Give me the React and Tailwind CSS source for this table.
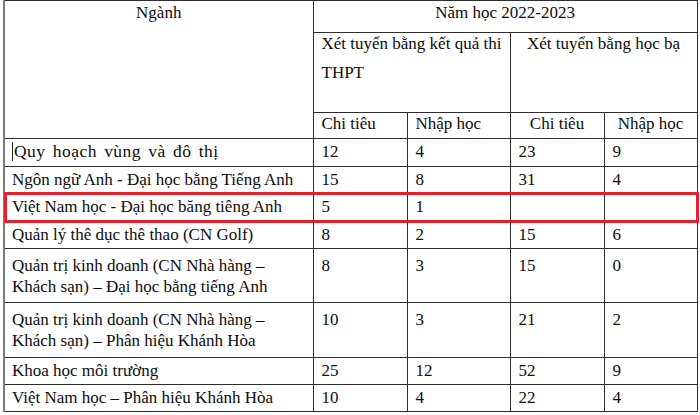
export default function App() {
  const rows = [
    { n: ["Quy hoạch vùng và đô thị"], v: ["12", "4", "23", "9"], h: "h-[27.5px]", cursor: true },
    { n: ["Ngôn ngữ Anh - Đại học bằng Tiếng Anh"], v: ["15", "8", "31", "4"], h: "h-[27.5px]" },
    { n: ["Việt Nam học - Đại học băng tiêng Anh"], v: ["5", "1", "", ""], h: "h-[28px]" },
    { n: ["Quản lý thê dục thê thao (CN Golf)"], v: ["8", "2", "15", "6"], h: "h-[27px]" },
    { n: ["Quản trị kinh doanh (CN Nhà hàng –", "Khách sạn) – Đại học bằng tiếng Anh"], v: ["8", "3", "15", "0"], h: "h-[54px]" },
    { n: ["Quản trị kinh doanh (CN Nhà hàng –", "Khách sạn) – Phân hiệu Khánh Hòa"], v: ["10", "3", "21", "2"], h: "h-[55px]" },
    { n: ["Khoa học môi trường"], v: ["25", "12", "52", "9"], h: "h-[27px]" },
    { n: ["Việt Nam học – Phân hiệu Khánh Hòa"], v: ["10", "4", "22", "4"], h: "h-[27px]" },
  ];
  const bd = "border border-[#2e2e2e]";
  return (
    <div className="w-[700px] h-[415px] bg-white relative overflow-hidden font-[family-name:'Liberation_Serif',serif] text-[17px] leading-[21px] text-[#0d0d0d]">
      <div className="pl-[3px]">
        <table className="table-fixed border-collapse w-[693px] border-l-2 border-l-[#7a7a7a]">
          <colgroup>
            <col className="w-[309px]" />
            <col className="w-[94px]" />
            <col className="w-[103px]" />
            <col className="w-[94px]" />
            <col className="w-[93px]" />
          </colgroup>
          <tbody>
            <tr className="h-[32px]">
              <td rowSpan={3} className={`${bd} border-l-2 border-l-[#7a7a7a] align-top text-center p-0 pt-[1px]`}>Ngành</td>
              <td colSpan={4} className={`${bd} align-top text-center p-0 pt-[1px]`}>Năm học 2022-2023</td>
            </tr>
            <tr className="h-[80px]">
              <td colSpan={2} className={`${bd} align-top px-[8px] pt-0`}>
                <div>Xét tuyển bằng kết quả thi</div>
                <div className="mt-[8px]">THPT</div>
              </td>
              <td colSpan={2} className={`${bd} align-top text-center p-0 pt-0`}>Xét tuyển bằng học bạ</td>
            </tr>
            <tr className="h-[26px]">
              <td className={`${bd} align-top px-[8px] pt-0`}>Chi tiêu</td>
              <td className={`${bd} align-top px-[8px] pt-0`}>Nhập học</td>
              <td className={`${bd} align-top text-center p-0 pt-0`}>Chi tiêu</td>
              <td className={`${bd} align-top text-center p-0 pt-0`}>Nhập học</td>
            </tr>
            {rows.map((r, i) => {
              const pt = r.n.length > 1 ? "pt-[6px]" : "pt-[2px]";
              return (
                <tr key={i} className={r.h}>
                  <td className={`${bd} border-l-2 border-l-[#7a7a7a] align-top pl-[7px] pr-1 ${pt}`}>
                    {r.n.map((t, j) => (
                      <div key={j} className={r.cursor ? "whitespace-nowrap text-[17.5px] tracking-[0.45px] [word-spacing:2.5px]" : "whitespace-nowrap"}>
                        {r.cursor && j === 0 ? <span className="inline-block w-[1px] h-[19px] bg-[#222] align-[-4px] mr-[1px]" /> : null}
                        {t}
                      </div>
                    ))}
                  </td>
                  {r.v.map((v, k) => (
                    <td key={k} className={`${bd} align-top px-[8px] ${pt}`}>{v}</td>
                  ))}
                </tr>
              );
            })}
          </tbody>
        </table>
      </div>
      <div className="absolute left-[4px] top-[192px] w-[695px] h-[31px] border-[3px] border-[#e3202b]" />
    </div>
  );
}
